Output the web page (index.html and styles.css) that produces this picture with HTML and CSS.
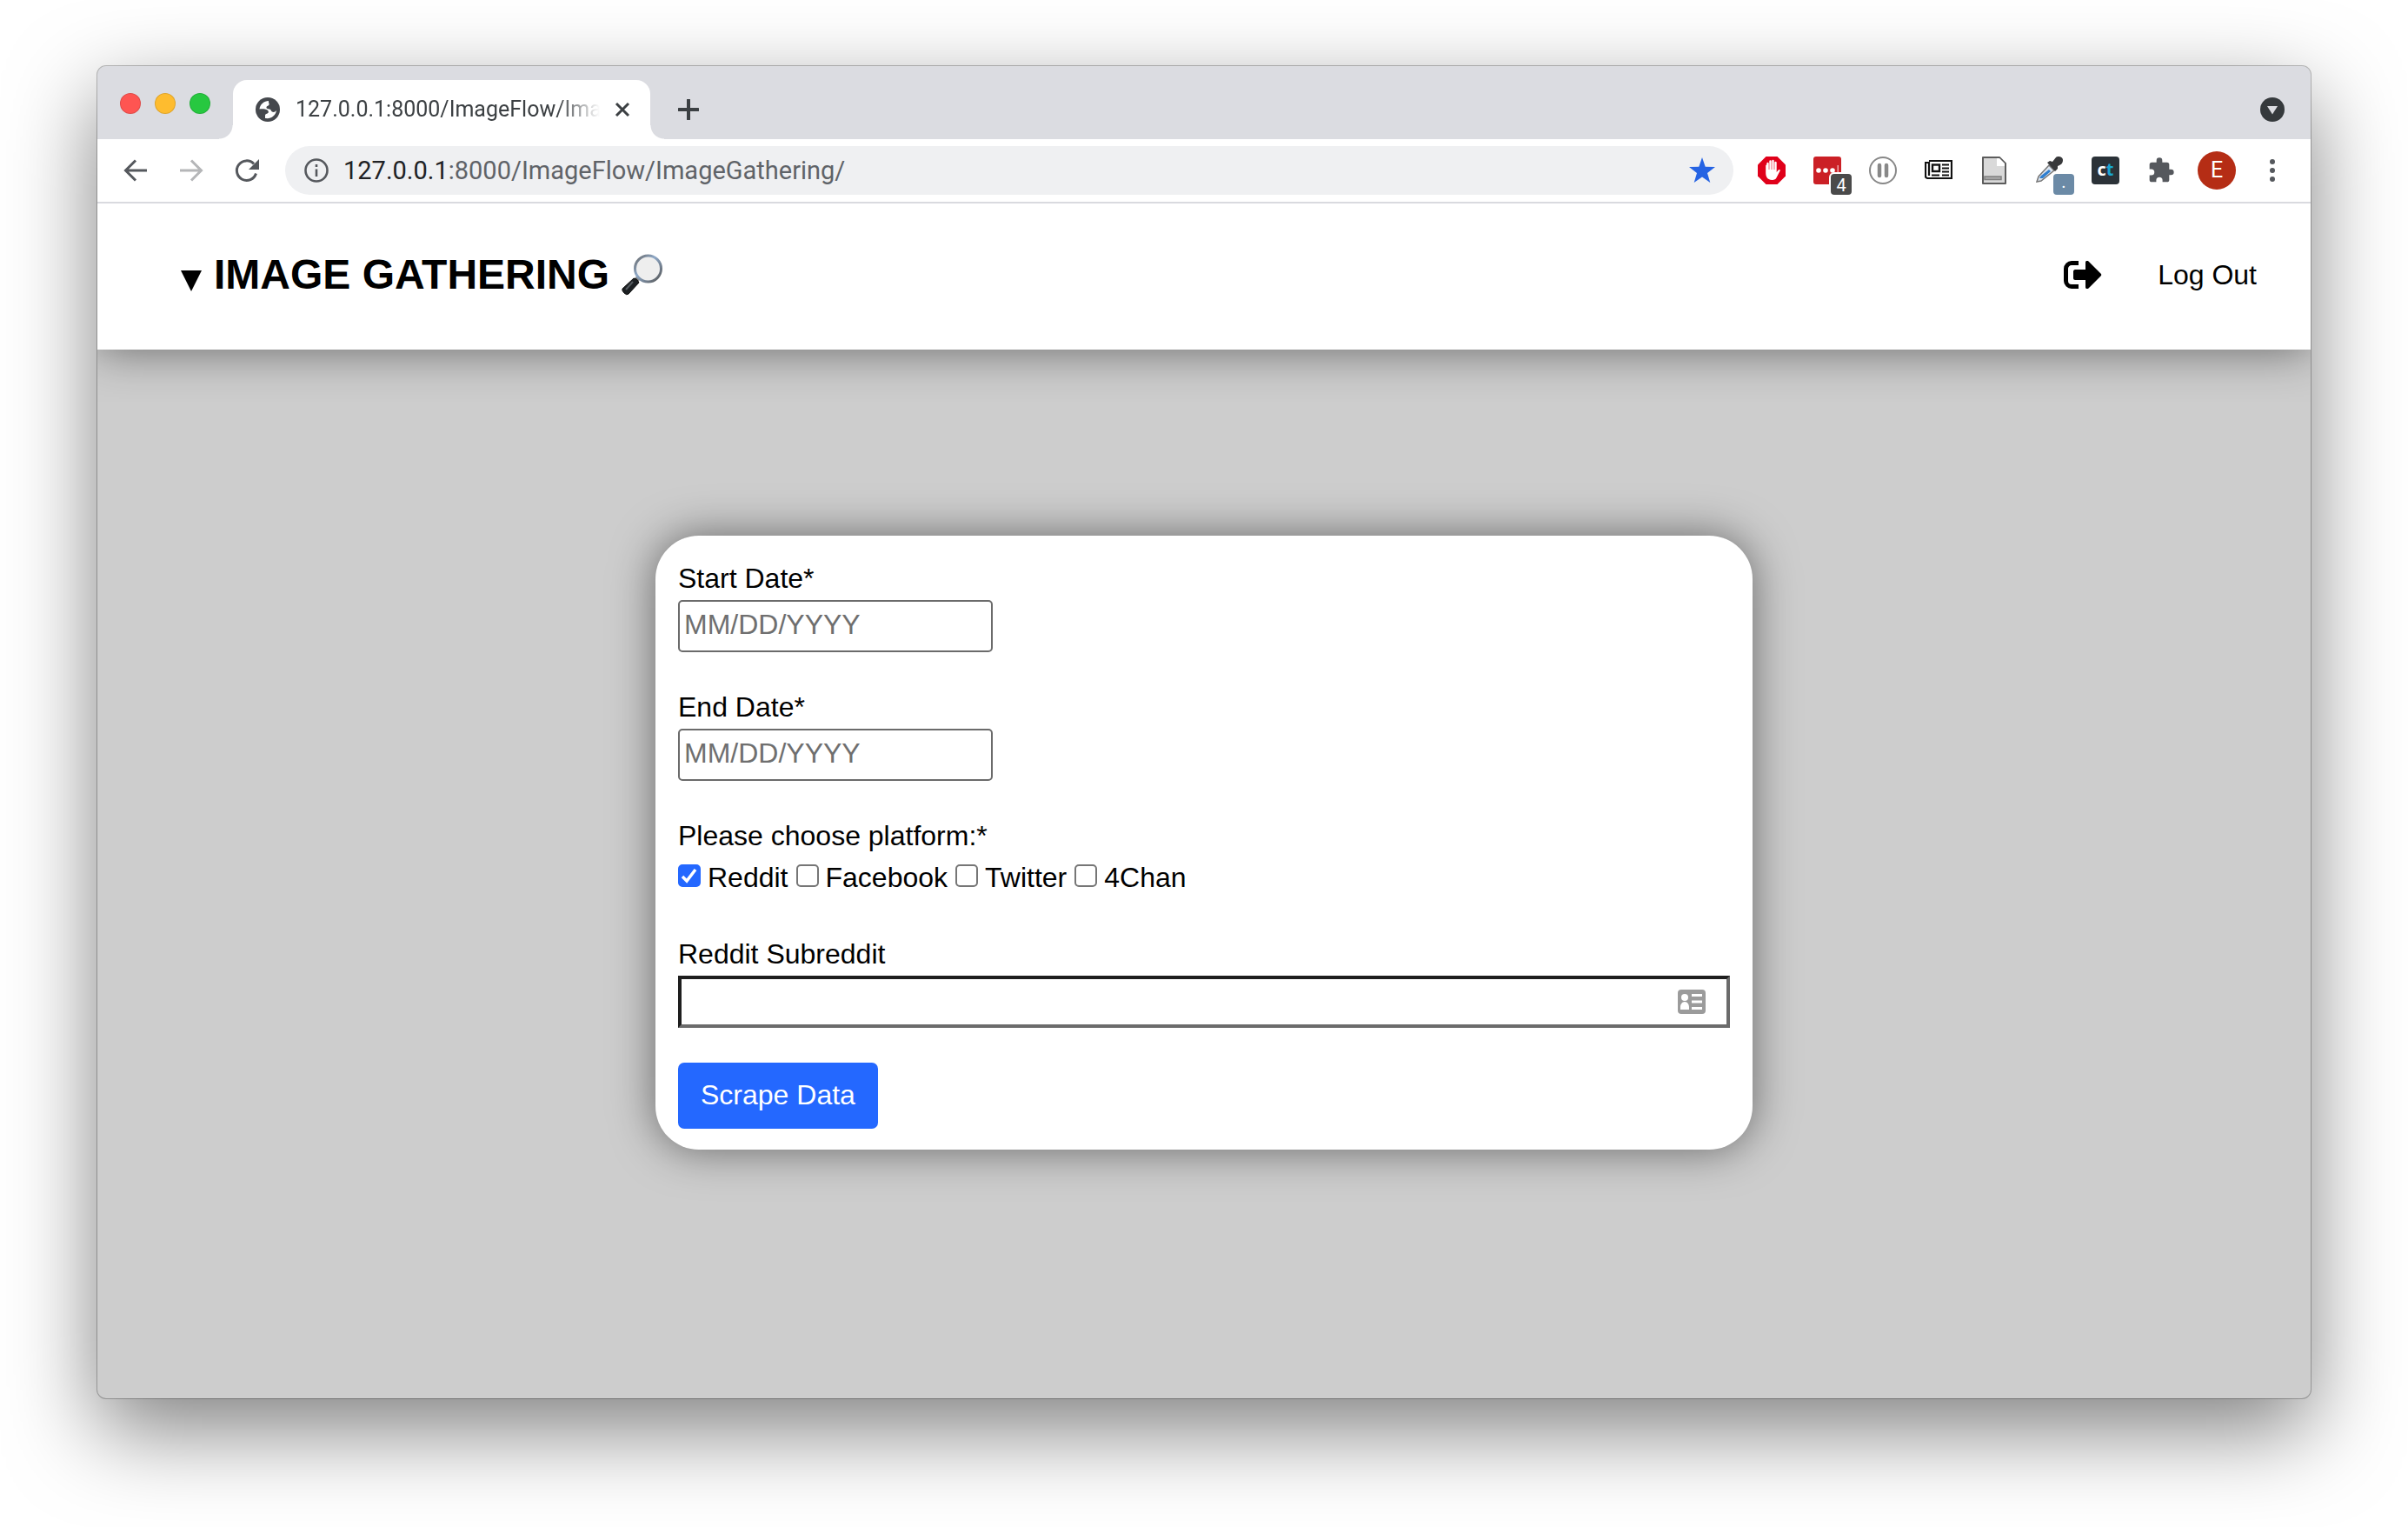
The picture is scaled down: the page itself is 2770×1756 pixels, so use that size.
FILE: index.html
```html
<!DOCTYPE html>
<html lang="en">
<head>
<meta charset="utf-8">
<title>Image Gathering</title>
<link rel="stylesheet" href="styles.css">
</head>
<body>
<div class="window">
  <div class="tabstrip">
    <div class="lights"><span class="light light-red"></span><span class="light light-yellow"></span><span class="light light-green"></span></div>
    <div class="tab">
      <svg class="globe" viewBox="0 0 28 28"><circle cx="14" cy="14" r="14" fill="#45484d"/><path d="M15 4c-5 0-10 4-10.500 9.500 3.500-.5 7 0 9 1 2 1.500 1.500 3.500 0 4-2 .5-2.500 1-2.500 2.500V24c7 1 12-3 13-9-1.500 2-3.500 2.500-5 1.500-1.500-1-1-2.500-3-3-2.500-.5-4-.5-3.500-2.500.5-1.500 2.500-1 3-2.500.5-1.500-1-3-.5-4.500z" fill="#fff"/></svg>
      <span class="tab-title">127.0.0.1:8000/ImageFlow/ImageGathering/</span>
      <button class="icon-btn" aria-label="Close tab"><svg width="20" height="20" viewBox="0 0 20 20"><path d="M3 3l14 14M17 3L3 17" stroke="#3c4043" stroke-width="3"/></svg></button>
    </div>
    <button class="icon-btn new-tab" aria-label="New tab"><svg width="24" height="24" viewBox="0 0 24 24"><path d="M12 1v22M1 12h22" stroke="#3c4043" stroke-width="4" stroke-linecap="round"/></svg></button>
    <button class="icon-btn tab-search" aria-label="Search tabs"><svg width="28" height="28" viewBox="0 0 28 28"><circle cx="14" cy="14" r="14" fill="#35393c"/><path d="M8 10h12l-6 9.500z" fill="#dbdce1"/></svg></button>
  </div>
  <div class="toolbar">
    <button class="icon-btn" aria-label="Back"><svg width="32" height="32" viewBox="0 0 32 32"><path d="M29 16H5M16 4.500L4.500 16 16 27.500" fill="none" stroke="#55585d" stroke-width="3"/></svg></button>
    <button class="icon-btn" aria-label="Forward"><svg width="32" height="32" viewBox="0 0 32 32"><path d="M3 16h24M16 4.500L27.500 16 16 27.500" fill="none" stroke="#b5b6b8" stroke-width="3"/></svg></button>
    <button class="icon-btn" aria-label="Reload"><svg width="32" height="32" viewBox="0 0 32 32"><path d="M26.500 19.500a11.300 11.300 0 1 1-2.500-11" fill="none" stroke="#55585d" stroke-width="3"/><path d="M30 3v12H18z" fill="#55585d"/></svg></button>
    <div class="omnibox">
      <svg width="28" height="28" viewBox="0 0 28 28"><circle cx="14" cy="14" r="12.500" fill="none" stroke="#55585d" stroke-width="2.600"/><path d="M14 12.500V21M14 7v3" stroke="#55585d" stroke-width="2.600"/></svg>
      <span class="url"><b>127.0.0.1</b>:8000/ImageFlow/ImageGathering/</span>
      <svg width="32" height="32" viewBox="0 0 32 32"><path d="M16 1l3.700 10.700L31 12l-9 7 3.300 11L16 23.600 6.700 30 10 19l-9-7 11.300-.3z" fill="#2563e3"/></svg>
    </div>
    <div class="extensions">
      <svg class="ext" viewBox="0 0 32 32"><path d="M9.500 0h13L32 9.500v13L22.500 32h-13L0 22.500v-13z" fill="#e0001a"/><path d="M10.300 18V8a1.200 1.200 0 0 1 2.400 0v7h.6V5.500a1.200 1.200 0 0 1 2.400 0V15h.6V5a1.200 1.200 0 0 1 2.400 0v10h.6V7a1.200 1.200 0 0 1 2.400 0v11l2-2.500c1-1 2.500-.5 2 .8l-4 7.700c-1 2.300-2.500 3-5 3-4.500 0-7.500-2.500-7.500-8V10.500a1 1 0 0 1 1.100-1z" fill="#fff"/></svg>
      <span class="ext-box"><svg class="ext" viewBox="0 0 32 32"><rect width="32" height="32" rx="3" fill="#cb2026"/><g fill="#fff"><circle cx="6" cy="16" r="2.800"/><circle cx="14" cy="16" r="2.800"/><circle cx="22" cy="16" r="2.800"/></g><path d="M27.500 10H29v12h-1.500z" fill="#eda5a8"/></svg><span class="badge badge-dark">4</span></span>
      <svg class="ext" viewBox="0 0 32 32"><circle cx="16" cy="16" r="15" fill="#fff" stroke="#888" stroke-width="2"/><path d="M12 10v12M20 10v12" stroke="#888" stroke-width="4.500" stroke-linecap="round"/></svg>
      <svg class="ext" viewBox="0 0 32 32"><path d="M5 5h26v20H3.500A2.500 2.500 0 0 1 1 22.500V7h4v15" fill="none" stroke="#111" stroke-width="2.200"/><rect x="9" y="9.500" width="8" height="7.500" fill="none" stroke="#111" stroke-width="2.400"/><path d="M20 9.500h8M20 13.500h8M20 17.500h8M8 21.500h9M20 21.500h8" stroke="#111" stroke-width="2"/></svg>
      <svg class="ext" viewBox="0 0 32 32"><path d="M3 1h19l7 7v23H3z" fill="#d9d9d9" stroke="#5c5c5c" stroke-width="2" stroke-linejoin="round"/><path d="M19 2h3l6 6v3h-9z" fill="#fff"/><path d="M5 23h19v3.500H5z" fill="#aaa" stroke="#808080" stroke-width="1.500"/></svg>
      <span class="ext-box"><svg class="ext" viewBox="0 0 32 32"><path d="M1 29l2-6L15 10l6 6L6 28z" fill="#dce4ee" stroke="#777" stroke-width="1.500"/><path d="M4 25l2-3 9-7 2 2-9 8z" fill="#2d7ed0"/><path d="M13 7l3-2 3 1 4-5c2-2 8-1 8 3 0 3-1 5-6 7l0 3-3 3z" fill="#38393b"/></svg><span class="badge badge-blue">.</span></span>
      <span class="ct">c<i>t</i></span>
      <svg class="ext" viewBox="0 0 24 24"><path d="M20.500 11H19V7a2 2 0 0 0-2-2h-4V3.500a2.500 2.500 0 0 0-5 0V5H4a2 2 0 0 0-2 2v3.800h1.500a2.700 2.700 0 0 1 0 5.400H2V20a2 2 0 0 0 2 2h3.800v-1.500a2.700 2.700 0 0 1 5.400 0V22H17a2 2 0 0 0 2-2v-4h1.500a2.500 2.500 0 0 0 0-5z" fill="#55585d"/></svg>
      <button class="avatar" aria-label="Profile">E</button>
      <svg class="ext" viewBox="0 0 32 32" fill="#55585d"><circle cx="16" cy="6" r="3"/><circle cx="16" cy="16" r="3"/><circle cx="16" cy="26" r="3"/></svg>
    </div>
  </div>
  <header class="site-header">
    <h1 class="title"><svg class="caret" viewBox="0 0 24 24"><path d="M0 0h24L12 24z"/></svg>IMAGE GATHERING
      <svg class="glass" viewBox="0 0 48 48"><defs><linearGradient id="rim" x1="0" y1="0" x2="1" y2="1"><stop offset="0" stop-color="#666"/><stop offset=".4" stop-color="#8fa9c8"/><stop offset="1" stop-color="#555"/></linearGradient></defs><path d="M17 26l4 4-4 4-4-4z" fill="#888"/><path d="M14 28q4 0 6 5L8 46q-2 2-5-1t-2-5z" fill="#1c2023" stroke="#111" stroke-linejoin="round"/><path d="M13 32L5 41" stroke="#555b60" stroke-width="2"/><circle cx="30.500" cy="17" r="15" fill="#eee" stroke="url(#rim)" stroke-width="3"/></svg>
    </h1>
    <a class="logout" href="#"><svg width="44" height="32" viewBox="0 0 44 32"><path d="M17 2.500H9A6.500 6.500 0 0 0 2.500 9v14A6.500 6.500 0 0 0 9 29.500h8" fill="none" stroke="#000" stroke-width="5"/><path d="M13 10h12V2c0-2 2-3 3.500-1.500l14 14c1 1 1 2 0 3l-14 14C27 33 25 32 25 30v-8H13c-1 0-2-1-2-2v-8c0-1 1-2 2-2z"/></svg><span>Log Out</span></a>
  </header>
  <main class="page">
    <form class="card">
      <div class="field"><label for="start">Start Date*</label><input class="date" id="start" type="text" placeholder="MM/DD/YYYY"></div>
      <div class="field"><label for="end">End Date*</label><input class="date" id="end" type="text" placeholder="MM/DD/YYYY"></div>
      <fieldset class="platforms"><legend>Please choose platform:*</legend>
        <div class="choices">
          <label><input type="checkbox" checked>Reddit</label>
          <label><input type="checkbox">Facebook</label>
          <label><input type="checkbox">Twitter</label>
          <label><input type="checkbox">4Chan</label>
        </div>
      </fieldset>
      <div class="field"><label for="sub">Reddit Subreddit</label>
        <div class="sub-wrap"><input class="sub" id="sub" type="text"><svg class="contact" viewBox="0 0 32 28"><rect width="32" height="28" rx="4" fill="#9b9b9b"/><g fill="#fff"><circle cx="8" cy="9" r="4"/><path d="M3 23v-3c0-3 2-6 5-6s5 3 5 6v3zM16 5h12v3H16zM16 12.500h12v3H16zM16 20h12v3H16z"/></g></svg></div>
      </div>
      <button class="submit" type="button">Scrape Data</button>
    </form>
  </main>
</div>
</body>
</html>
```
FILE: styles.css
```css
* { box-sizing: border-box; }
body {
  margin: 0;
  min-height: 100vh;
  padding: 76px 112px 148px;
  display: flex;
  background: #fff;
  color: #000;
  font: 32px/36px "Liberation Sans", Arial, sans-serif;
}
.window {
  flex: 1;
  display: flex;
  flex-direction: column;
  overflow: hidden;
  border-radius: 10px;
  background: #cdcdcd;
  box-shadow: 0 0 0 1px rgba(0, 0, 0, .25), 0 36px 100px rgba(0, 0, 0, .5);
}
svg { display: block; flex: none; }
button { font: inherit; border: 0; cursor: pointer; }
.icon-btn { padding: 0; background: none; }

/* Browser frame */
.tabstrip {
  display: flex;
  height: 84px;
  padding: 16px 30px 0 26px;
  background: #dbdce1;
}
.lights { display: flex; gap: 16px; margin: 15px 26px 0 0; }
.light { width: 24px; height: 24px; border-radius: 50%; border: 1px solid rgba(0, 0, 0, .12); }
.light-red { background: #fe5552; }
.light-yellow { background: #febc2f; }
.light-green { background: #27c840; }
.tab {
  position: relative;
  display: flex;
  align-items: center;
  width: 480px;
  padding: 0 22px 0 26px;
  border-radius: 16px 16px 0 0;
  background: #fff;
}
.tab::before, .tab::after {
  content: "";
  position: absolute;
  bottom: 0;
  width: 16px;
  height: 16px;
}
.tab::before { right: 100%; background: radial-gradient(circle at 0 0, transparent 15px, #fff 16px); }
.tab::after { left: 100%; background: radial-gradient(circle at 100% 0, transparent 15px, #fff 16px); }
.globe { width: 28px; height: 28px; margin-right: 18px; }
.tab-title {
  flex: 1;
  overflow: hidden;
  white-space: nowrap;
  margin-right: 16px;
  color: #3c4043;
  font: 25px/32px Roboto, sans-serif;
  -webkit-mask-image: linear-gradient(to right, #000 86%, transparent);
  mask-image: linear-gradient(to right, #000 86%, transparent);
}
.new-tab { margin-left: 32px; }
.tab-search { margin-left: auto; }
.toolbar {
  display: flex;
  align-items: center;
  gap: 32px;
  height: 74px;
  padding: 0 28px;
  border-bottom: 2px solid #d9dadf;
  background: #fff;
}
.omnibox {
  flex: 1;
  display: flex;
  align-items: center;
  height: 56px;
  margin-left: -4px;
  padding: 0 20px 0 22px;
  border-radius: 28px;
  background: #eff0f2;
}
.url { flex: 1; margin-left: 17px; color: #5f6368; font: 29px/36px Roboto, sans-serif; }
.url b { font-weight: 400; color: #202124; }
.extensions { display: flex; align-items: center; gap: 32px; margin-left: -4px; }
.ext { width: 32px; height: 32px; }
.ext-box { position: relative; }
.badge {
  position: absolute;
  left: 20px;
  top: 20px;
  width: 24px;
  height: 24px;
  border-radius: 4px;
  color: #fff;
  font: 20px/26px Roboto, sans-serif;
  text-align: center;
}
.badge-dark { background: #4a4a4a; box-shadow: 0 0 0 2px #fff; }
.badge-blue { background: #6b8aa6; line-height: 18px; }
.ct {
  width: 32px;
  height: 32px;
  border-radius: 4px;
  background: #2b3238;
  color: #fff;
  font: bold 20px/30px "Open Sans", sans-serif;
  text-align: center;
}
.ct i { color: #1ba6d2; font-style: normal; }
.avatar {
  width: 44px;
  height: 44px;
  margin: 0 -6px;
  padding: 0;
  border-radius: 50%;
  background: #b52d15;
  color: #fff;
  font: 25px/44px Roboto, sans-serif;
}

/* Site */
.site-header {
  display: flex;
  align-items: center;
  justify-content: space-between;
  height: 168px;
  padding: 0 62px 4px 96px;
  background: #fff;
  box-shadow: 0 0 50px rgba(0, 0, 0, .5);
  position: relative;
  clip-path: inset(0 0 -60px 0);
}
.title { display: flex; align-items: center; margin: 0; font-size: 48px; line-height: 56px; }
.caret { width: 24px; height: 24px; margin: 14px 14px 0 0; }
.glass { width: 48px; height: 48px; margin-left: 14px; }
.logout { display: flex; align-items: center; gap: 64px; color: #000; text-decoration: none; }
.page { flex: 1; padding: 214px 0; display: flex; justify-content: center; align-items: flex-start; }
.card {
  width: 1262px;
  max-width: 90%;
  padding: 31px 26px 24px;
  border-radius: 50px;
  background: #fff;
  box-shadow: 0 0 50px rgba(0, 0, 0, .5);
}
.field > label { display: block; margin-bottom: 7px; }
.date {
  display: block;
  width: 362px;
  height: 60px;
  margin-bottom: 45px;
  padding: 0 5px 3px;
  border: 2px solid #6b6b6b;
  border-radius: 5px;
  font: inherit;
}
.date::placeholder { color: #6f6f6f; }
.platforms { margin: 0 0 52px; padding: 0; border: 0; }
.platforms legend { padding: 0; }
.choices { display: flex; gap: 9px; padding-top: 12px; }
.choices label { display: flex; align-items: center; gap: 8px; }
.choices input {
  appearance: none;
  width: 26px;
  height: 26px;
  margin: 0 0 4px;
  border: 2px solid #767676;
  border-radius: 5px;
  background: #fff;
}
.choices input:checked {
  border-color: #2468ff;
  background: #2468ff url("data:image/svg+xml,%3Csvg xmlns='http://www.w3.org/2000/svg' viewBox='0 0 22 22'%3E%3Cpath d='M3 12l5 5L18 4' fill='none' stroke='white' stroke-width='3.500'/%3E%3C/svg%3E") center / 22px no-repeat;
}
.sub-wrap { position: relative; margin-bottom: 40px; }
.sub {
  display: block;
  width: 100%;
  height: 60px;
  padding: 0 60px 0 6px;
  border: 4px solid;
  border-color: #1e1e1e #6b6b6b #6b6b6b #1e1e1e;
  font: inherit;
}
.contact { position: absolute; right: 28px; top: 16px; width: 32px; height: 28px; }
.submit {
  display: block;
  height: 76px;
  padding: 0 26px 2px;
  border-radius: 7px;
  background: #2468ff;
  color: #fff;
}
```
